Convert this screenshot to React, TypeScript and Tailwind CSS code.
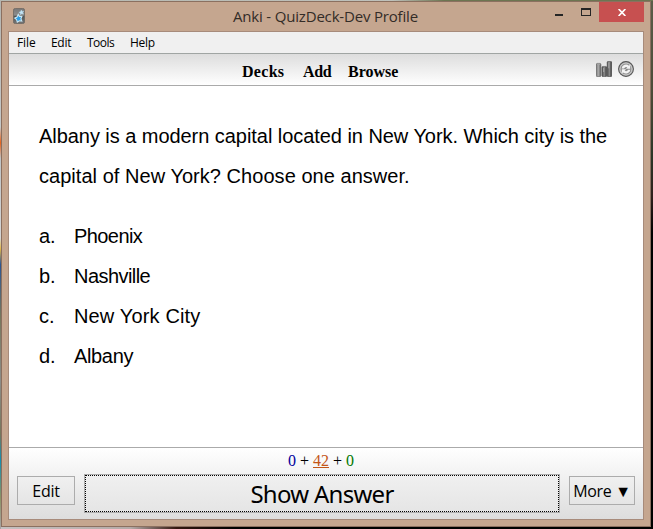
import React from "react";

const answers = [
  { key: "a.", text: "Phoenix", spacing: "tracking-[-0.58px]" },
  { key: "b.", text: "Nashville", spacing: "tracking-[-0.55px]" },
  { key: "c.", text: "New York City", spacing: "tracking-[0.15px]" },
  { key: "d.", text: "Albany", spacing: "tracking-[-0.35px]" },
];

function AppIcon() {
  return (
    <svg width="12" height="16" viewBox="0 0 12 16" className="block">
      <defs>
        <linearGradient id="app" x1="0" y1="0" x2="0" y2="1">
          <stop offset="0" stopColor="#777" />
          <stop offset=".45" stopColor="#8d8d8d" />
          <stop offset=".5" stopColor="#505354" />
          <stop offset="1" stopColor="#777" />
        </linearGradient>
      </defs>
      <rect x=".4" y=".4" width="11.2" height="15.2" rx="2" fill="url(#app)" stroke="#686560" strokeWidth=".8" />
      <path d="M8.3 2l.8 1.4 1.6-.2-.9 1.4.6 1.5-1.7-.4-1.3 1-.1-1.6-1.4-.8 1.6-.6z" fill="#c4e6f7" stroke="#b5d8ec" strokeWidth=".5" />
      <path d="M5.2 6.4l1.2 2 2.5-.1-1 2.4.9 2.3-2.5-.3-2 1.4-.7-2.4-1.8-1.5 2.2-1.1z" fill="#2d9ce5" stroke="#cbe9f5" strokeWidth="1.1" />
    </svg>
  );
}

function StatsIcon() {
  return (
    <svg width="16" height="16" viewBox="0 0 16 16" className="block">
      <defs>
        <linearGradient id="bar" x1="0" x2="1">
          <stop offset="0" stopColor="#686868" />
          <stop offset=".4" stopColor="#b2b2b2" />
          <stop offset="1" stopColor="#606060" />
        </linearGradient>
        <linearGradient id="darkbar" x1="0" x2="1">
          <stop offset="0" stopColor="#4b4b4b" />
          <stop offset=".5" stopColor="#8b8b8b" />
          <stop offset="1" stopColor="#363636" />
        </linearGradient>
      </defs>
      <rect x=".3" y="2.4" width="4.6" height="13.3" rx="1.1" fill="url(#bar)" stroke="#595959" strokeWidth=".6" />
      <ellipse cx="2.6" cy="3.3" rx="1.8" ry=".8" fill="#a5a5a5" />
      <rect x="5.9" y="5.4" width="4.8" height="10.3" rx="1" fill="url(#darkbar)" stroke="#484848" strokeWidth=".5" />
      <rect x="11.2" y=".4" width="4.5" height="15.3" rx="1" fill="url(#darkbar)" stroke="#444" strokeWidth=".6" />
      <path d="M12.8 1.3v6M7.7 7v4" stroke="#b0b0b0" strokeWidth=".9" />
    </svg>
  );
}

function SyncIcon() {
  return (
    <svg width="16" height="16" viewBox="0 0 16 16" className="block">
      <circle cx="8" cy="8" r="7.4" fill="#b8b8b8" stroke="#555" strokeWidth="1.1" />
      <circle cx="8" cy="8" r="5.9" fill="#8c8c8c" stroke="#d2d2d2" strokeWidth=".8" />
      <path d="M3.6 7.4a4.5 4.5 0 0 1 7.4-2.7l1.2-1.1v4.2H7.9l1.5-1.5a2.5 2.5 0 0 0-3.4 1.1z" fill="#f3f3f3" />
      <path d="M12.4 8.7A4.5 4.5 0 0 1 5 11.4l-1.2 1.1V8.3h4.3L6.6 9.8A2.5 2.5 0 0 0 10 8.7z" fill="#f3f3f3" />
    </svg>
  );
}

export default function App() {
  return (
    <div className="h-[529px] w-[653px] overflow-hidden bg-[linear-gradient(180deg,#5b5d49_0%,#4b4b38_18%,#2b3526_30%,#30201c_37%,#000_44%,#000_100%)] font-['Open_Sans','Noto_Sans',sans-serif] text-black">
      <div className="flex h-full w-full bg-[linear-gradient(180deg,#b5b5b0,#c5c8c8_24%,#e8631c_27%,#bfc4c6_30%,#d5d5d5_45%,#e3b84a_47%,#2c5592_50%,#77775c_60%,#8c8c88_72%,#77765b_82%,#168eae_87%,#8b9264_94%,#a9a5a5),linear-gradient(90deg,#b5b8b0_0%,#bfc1bb_60%,#6c7551_68%,#6c7551_100%),linear-gradient(90deg,#c5c1c1_0%,#b5aba8_20%,#351810_27%,#000_36%,#000_100%)] bg-[length:1px_100%,100%_1px,100%_2px] bg-[position:left_top,left_top,left_bottom] bg-no-repeat pl-px pt-px">
        <main className="flex h-[526px] w-[650px] flex-col border border-[#8b7060] bg-[#c5a68f]">
          <header className="flex h-[29px] shrink-0 items-start">
            <div className="ml-[11px] mt-[6px]"><AppIcon /></div>
            <h1 className="ml-[208px] mt-[4px] w-[220px] whitespace-nowrap text-[15px] leading-[21px] tracking-[-0.18px] text-[#332c27]">Anki - QuizDeck-Dev Profile</h1>
            <div className="ml-[102px] flex">
              <button className="mt-[12px] h-[2px] w-[8px] bg-[#252525]" aria-label="Minimize" />
              <button className="ml-[18px] mt-[6px] h-[8px] w-[10px] border border-t-2 border-[#252525]" aria-label="Maximize" />
              <button className="ml-[8px] flex h-[20px] w-[45px] items-center justify-center bg-[#c75050]" aria-label="Close">
                <svg width="8" height="7" viewBox="0 0 8 7"><path d="M.6 0l6.8 7M7.4 0L.6 7" stroke="white" strokeWidth="1.7" /></svg>
              </button>
            </div>
          </header>
          <section className="ml-[6px] flex h-[489px] w-[636px] shrink-0 flex-col border border-[#a78b7b] bg-white">
            <nav className="flex h-[22px] shrink-0 border-b border-[#a0a5a3] bg-[#f0f0f0] pl-[8px] text-[12px] leading-[22px]">
              <span className="w-[34px] tracking-[-0.1px]">File</span>
              <span className="w-[36px] tracking-[-0.3px]">Edit</span>
              <span className="w-[43px] tracking-[-0.5px]">Tools</span>
              <span className="tracking-[-0.3px]">Help</span>
            </nav>
            <nav className="flex h-[32px] shrink-0 items-start border-b border-[#aaa] bg-gradient-to-b from-[#dddddd] to-white pl-[233px] font-['Liberation_Serif',serif] text-[16px] font-bold leading-[34px]">
              <span className="w-[61px] pt-px tracking-[0.3px]">Decks</span>
              <span className="w-[45px] pt-px tracking-[-0.3px]">Add</span>
              <span className="w-[248px] pt-px">Browse</span>
              <span className="mt-[7px] w-[22px]"><StatsIcon /></span>
              <span className="mt-[7px]"><SyncIcon /></span>
            </nav>
            <article className="flex h-[361px] shrink-0 flex-col pl-[30px] pt-[30px] font-['Liberation_Sans',Arial,sans-serif] text-[20px] leading-[40px]">
              <p className="whitespace-nowrap tracking-[-0.05px]">Albany is a modern capital located in New York. Which city is the</p>
              <p className="whitespace-nowrap tracking-[0.04px]">capital of New York? Choose one answer.</p>
              <div className="mt-[20px]">
                {answers.map((a) => <div className="flex" key={a.key}><span className="w-[35px]">{a.key}</span><span className={a.spacing}>{a.text}</span></div>)}
              </div>
            </article>
            <footer className="h-[72px] shrink-0 border-t border-[#aaa] bg-gradient-to-b from-white to-[#dddddd]">
              <div className="flex h-[26px] justify-center gap-[4px] pr-[10px] font-['Liberation_Serif',serif] text-[16px] leading-[26px]">
                <span className="text-[#00009c]">0</span><span>+</span><span className="text-[#c35617] underline">42</span><span>+</span><span className="text-[#007700]">0</span>
              </div>
              <div className="flex items-start pl-[8px]">
                <button className="mt-[2px] h-[29px] w-[58px] border border-[#acacac] bg-gradient-to-b from-[#f0f0f0] to-[#e5e5e5] text-[16px] leading-[28px] tracking-[-0.2px]">Edit</button>
                <button className="ml-[9px] h-[39px] w-[476px] border border-[#acacac] bg-gradient-to-b from-[#f0f0f0] to-[#e5e5e5]">
                  <span className="block h-[37px] border border-dotted border-black font-['Noto_Sans',sans-serif] text-[24px] leading-[35px] tracking-[-0.72px]">Show Answer</span>
                </button>
                <button className="ml-[9px] mt-[2px] h-[29px] w-[66px] whitespace-nowrap border border-[#acacac] bg-gradient-to-b from-[#f0f0f0] to-[#e5e5e5] text-[16px] leading-[28px] tracking-[-0.3px]">More ▼</button>
              </div>
            </footer>
          </section>
        </main>
      </div>
    </div>
  );
}
